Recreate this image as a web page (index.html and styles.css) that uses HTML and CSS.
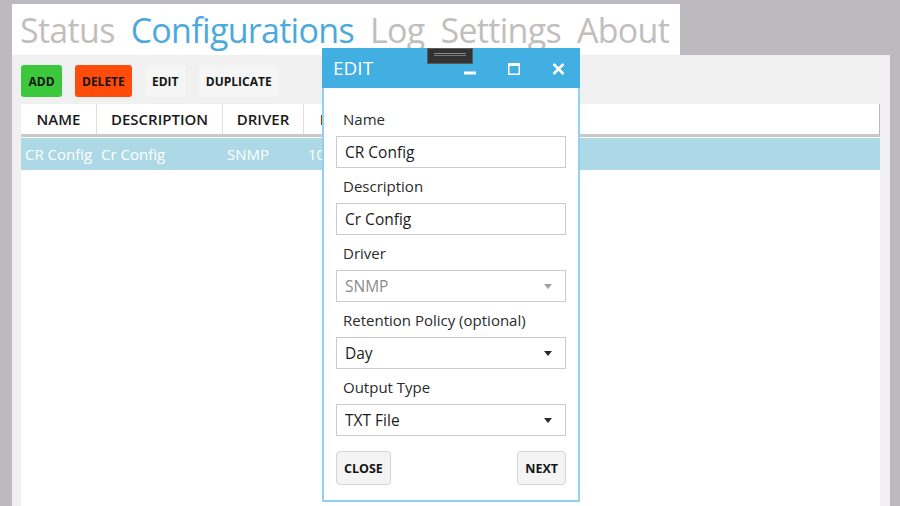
FILE: index.html
```html
<!DOCTYPE html>
<html>
<head>
<meta charset="utf-8">
<link rel="stylesheet" href="styles.css">
</head>
<body>
<div class="app">
  <nav class="tabs">
    <span class="tab">Status</span>
    <span class="tab active">Configurations</span>
    <span class="tab">Log</span>
    <span class="tab">Settings</span>
    <span class="tab">About</span>
  </nav>
  <main class="panel">
    <div class="toolbar">
      <button class="btn add">ADD</button>
      <button class="btn delete">DELETE</button>
      <button class="btn plain">EDIT</button>
      <button class="btn plain">DUPLICATE</button>
    </div>
    <div class="table">
      <div class="thead">
        <div class="th c1">NAME</div>
        <div class="th c2">DESCRIPTION</div>
        <div class="th c3">DRIVER</div>
        <div class="th c4">FREQUENCY</div>
        <div class="th rest"></div>
      </div>
      <div class="trow selected">
        <div class="td c1">CR Config</div>
        <div class="td c2">Cr Config</div>
        <div class="td c3">SNMP</div>
        <div class="td c4">10</div>
        <div class="td rest"></div>
      </div>
    </div>
  </main>

  <section class="dialog">
    <header class="titlebar">
      <span class="title">EDIT</span>
      <div class="winbtns">
        <span class="winbtn">
          <svg width="12" height="12" viewBox="0 0 12 12"><rect x="0" y="8.5" width="12" height="3" fill="#fff"/></svg>
        </span>
        <span class="winbtn">
          <svg width="12" height="12" viewBox="0 0 12 12"><rect x="0.75" y="0.75" width="10.5" height="10.5" fill="none" stroke="#fff" stroke-width="1.5"/><rect x="0" y="0" width="12" height="3" fill="#fff"/></svg>
        </span>
        <span class="winbtn">
          <svg width="13" height="12" viewBox="0 0 13 12"><path d="M1.5 1 L11.5 11 M11.5 1 L1.5 11" stroke="#fff" stroke-width="2.6" stroke-linecap="butt"/></svg>
        </span>
      </div>
    </header>
    <div class="dialog-body">
      <label class="flabel first">Name</label>
      <input class="field" value="CR Config">
      <label class="flabel">Description</label>
      <input class="field" value="Cr Config">
      <label class="flabel">Driver</label>
      <div class="field select disabled"><span>SNMP</span><span class="caret"></span></div>
      <label class="flabel">Retention Policy (optional)</label>
      <div class="field select"><span>Day</span><span class="caret"></span></div>
      <label class="flabel">Output Type</label>
      <div class="field select"><span>TXT File</span><span class="caret"></span></div>
      <div class="actions">
        <button class="dbtn">CLOSE</button>
        <button class="dbtn">NEXT</button>
      </div>
    </div>
  </section>
  <div class="grip"><div class="grip-lines"></div></div>
</div>
</body>
</html>
```

FILE: styles.css
```css
html, body {
  margin: 0;
  padding: 0;
}
body {
  background: #bcbabe;
  font-family: "Open Sans", "Noto Sans", sans-serif;
  width: 900px;
  height: 506px;
  overflow: hidden;
}
.app {
  position: relative;
  padding: 4px 0 0 12px;
  height: 502px;
}
.tabs {
  width: 668px;
  height: 51px;
  background: #fff;
  display: flex;
  gap: 16px;
  padding: 2px 0 0 8px;
  box-sizing: border-box;
}
.tab {
  font-size: 34px;
  letter-spacing: -0.7px;
  line-height: 48px;
  color: #c2bebd;
  white-space: nowrap;
}
.tab.active {
  color: #4ca9de;
}
.panel {
  width: 878px;
  height: 451px;
  background: #f0f0f0;
  padding: 10px 10px 0 9px;
  box-sizing: border-box;
  display: flex;
  flex-direction: column;
}
.toolbar {
  display: flex;
  gap: 13px;
  height: 32px;
}
.btn {
  border: 0;
  border-radius: 3px;
  padding: 0 7px;
  min-width: 41px;
  height: 32px;
  font-family: "Open Sans", sans-serif;
  font-weight: 700;
  font-size: 12px;
  color: #151515;
  background: #f5f5f5;
}
.btn.add { background: #3cc83c; }
.btn.delete { background: #ff4c0a; }
.table {
  margin-top: 7px;
  flex: 1;
  background: #fff;
}
.thead {
  display: flex;
  height: 30px;
  border-bottom: 3px solid #c9c9c9;
  border-right: 1px solid #b9b9b9;
}
.th {
  font-size: 15px;
  font-weight: 600;
  color: #1b1b1b;
  text-align: center;
  line-height: 30px;
  border-right: 1px solid #dedede;
  box-sizing: border-box;
}
.th.rest, .td.rest { flex: 1; border-right: 0; }
.c1 { width: 76px; }
.c2 { width: 126px; }
.c3 { width: 81px; }
.c4 { width: 120px; }
.trow {
  display: flex;
  height: 32px;
  margin-top: 1px;
}
.trow.selected {
  background: #add8e6;
}
.td {
  font-size: 15px;
  color: #fff;
  line-height: 32px;
  padding-left: 4px;
  box-sizing: border-box;
  white-space: nowrap;
}
.dialog {
  position: absolute;
  left: 322px;
  top: 48px;
  width: 258px;
  display: flex;
  flex-direction: column;
}
.titlebar {
  height: 40px;
  background: #41afe2;
  display: flex;
  align-items: center;
  padding-left: 11px;
}
.title {
  font-size: 19px;
  color: #fff;
  line-height: 40px;
}
.winbtns {
  margin-left: auto;
  display: flex;
}
.winbtn {
  width: 44px;
  height: 40px;
  display: flex;
  align-items: center;
  justify-content: center;
  padding-top: 2px;
  box-sizing: border-box;
}
.dialog-body {
  background: #fff;
  border: 2px solid #8fd2f3;
  border-top: 0;
  padding: 13px 12px 15px;
  display: flex;
  flex-direction: column;
}
.flabel {
  display: block;
  height: 35px;
  box-sizing: border-box;
  padding: 8px 0 0 7px;
  font-size: 15px;
  line-height: 20px;
  color: #2b2b2b;
}
.field {
  height: 32px;
  box-sizing: border-box;
  border: 1px solid #cbcbcb;
  padding: 0 0 0 8px;
  font-family: "Open Sans", sans-serif;
  font-size: 15.5px;
  color: #1b1b1b;
  background: #fff;
  outline: none;
  width: 230px;
  margin: 0;
}
.select {
  display: flex;
  align-items: center;
  justify-content: space-between;
  padding-right: 13px;
}
.caret {
  width: 0;
  height: 0;
  border-left: 4.5px solid transparent;
  border-right: 4.5px solid transparent;
  border-top: 5px solid #2a2a2a;
}
.select.disabled { color: #8c8c8c; }
.select.disabled .caret { border-top-color: #a0a0a0; }
.actions {
  display: flex;
  justify-content: space-between;
  margin-top: 15px;
}
.dbtn {
  height: 34px;
  padding: 0 7px;
  border: 1px solid #d5d5d5;
  border-radius: 4px;
  background: #f4f4f4;
  font-family: "Open Sans", sans-serif;
  font-weight: 700;
  font-size: 12.5px;
  color: #151515;
}
.grip {
  position: absolute;
  left: 427px;
  top: 48px;
  width: 46px;
  height: 16px;
  box-sizing: border-box;
  background: #323232;
  border: 1px solid #5a5a5a;
  padding-top: 4px;
}
.grip-lines {
  width: 32px;
  height: 1px;
  margin: 0 auto;
  border-top: 1px solid #8a8a8a;
  border-bottom: 1px solid #777;
}
```
